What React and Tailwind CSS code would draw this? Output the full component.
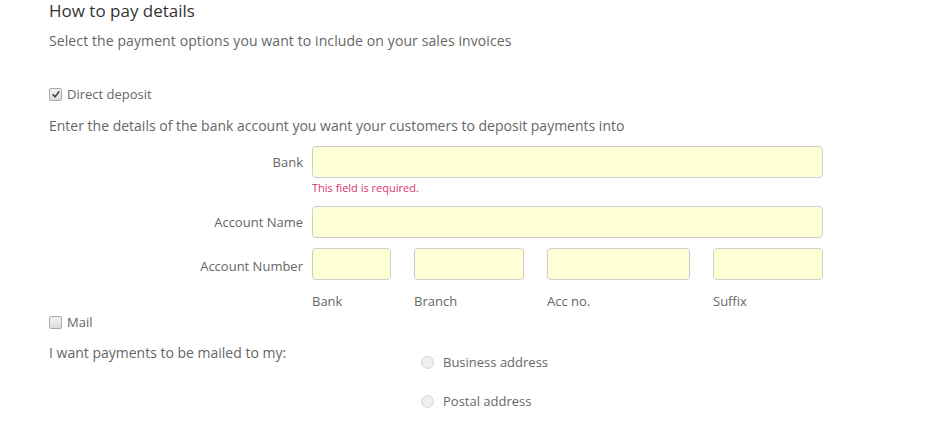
import { useState } from 'react';

function Field({ className = '' }) {
  return (
    <input
      type="text"
      className={`h-[32px] rounded-[4px] border border-[#cccccc] bg-[#ffffd6] px-2 text-[14px] text-[#555] outline-none ${className}`}
    />
  );
}

function Check({ checked, onChange }) {
  return (
    <span className="relative inline-flex h-[13px] w-[13px] items-center justify-center">
      <input
        type="checkbox"
        checked={checked}
        onChange={onChange}
        className="h-[13px] w-[13px] appearance-none rounded-[2px] border border-[#a9a9a9] bg-gradient-to-b from-[#f4f4f4] to-[#dcdcdc]"
      />
      {checked && (
        <svg viewBox="0 0 12 12" className="pointer-events-none absolute h-[10px] w-[10px]">
          <path d="M2 6.5 L4.8 9.2 L10 2.8" fill="none" stroke="#4a4a4a" strokeWidth="2" />
        </svg>
      )}
    </span>
  );
}

function Radio({ name }) {
  return (
    <input
      type="radio"
      name={name}
      className="h-[13px] w-[13px] appearance-none rounded-full border border-[#d6d6d6] bg-[#efefef] checked:bg-[#bbbbbb]"
    />
  );
}

export default function App() {
  const [direct, setDirect] = useState(true);
  const [mail, setMail] = useState(false);

  return (
    <div className="min-h-[436px] bg-white pl-[49px] text-[14px] text-[#666]" style={{ fontFamily: '"Open Sans", Arial, sans-serif' }}>
      <h2 className="pt-[0px] text-[17px] leading-[22px] text-[#333]">How to pay details</h2>
      <p className="mt-[9px] leading-[20px] tracking-[0.1px]">Select the payment options you want to include on your sales invoices</p>

      <label className="mt-[33px] flex items-center gap-[5px] text-[13px] leading-[20px]">
        <Check checked={direct} onChange={(e) => setDirect(e.target.checked)} />
        Direct deposit
      </label>

      <p className="mt-[12px] leading-[20px]">Enter the details of the bank account you want your customers to deposit payments into</p>

      <div className="mt-[10px] flex">
        <div className="w-[263px] pr-[9px] pt-[6px] text-right text-[13px] leading-[20px]">Bank</div>
        <div className="flex flex-col">
          <Field className="w-[511px]" />
          <span className="mt-[2px] text-[11px] leading-[16px] text-[#d9346a]">This field is required.</span>
        </div>
      </div>

      <div className="mt-[10px] flex">
        <div className="w-[263px] pr-[9px] pt-[6px] text-right text-[13px] leading-[20px]">Account Name</div>
        <Field className="w-[511px]" />
      </div>

      <div className="mt-[10px] flex">
        <div className="w-[263px] pr-[9px] pt-[8px] text-right text-[13px] leading-[20px]">Account Number</div>
        <div className="flex gap-[23px] text-[13px]">
          <div className="flex flex-col">
            <Field className="w-[79px]" />
            <span className="mt-[11px] leading-[20px]">Bank</span>
          </div>
          <div className="flex flex-col">
            <Field className="w-[110px]" />
            <span className="mt-[11px] leading-[20px]">Branch</span>
          </div>
          <div className="flex flex-col">
            <Field className="w-[143px]" />
            <span className="mt-[11px] leading-[20px]">Acc no.</span>
          </div>
          <div className="flex flex-col">
            <Field className="w-[110px]" />
            <span className="mt-[11px] leading-[20px]">Suffix</span>
          </div>
        </div>
      </div>

      <label className="mt-[1px] flex items-center gap-[5px] text-[13px] leading-[20px]">
        <Check checked={mail} onChange={(e) => setMail(e.target.checked)} />
        Mail
      </label>

      <div className="mt-[11px] flex">
        <div className="w-[372px] leading-[20px]">I want payments to be mailed to my:</div>
        <div className="flex flex-col gap-[19px] pt-[9px] text-[13px]">
          <label className="flex items-center gap-[9px] leading-[20px]">
            <Radio name="addr" />
            Business address
          </label>
          <label className="flex items-center gap-[9px] leading-[20px]">
            <Radio name="addr" />
            Postal address
          </label>
        </div>
      </div>
    </div>
  );
}
